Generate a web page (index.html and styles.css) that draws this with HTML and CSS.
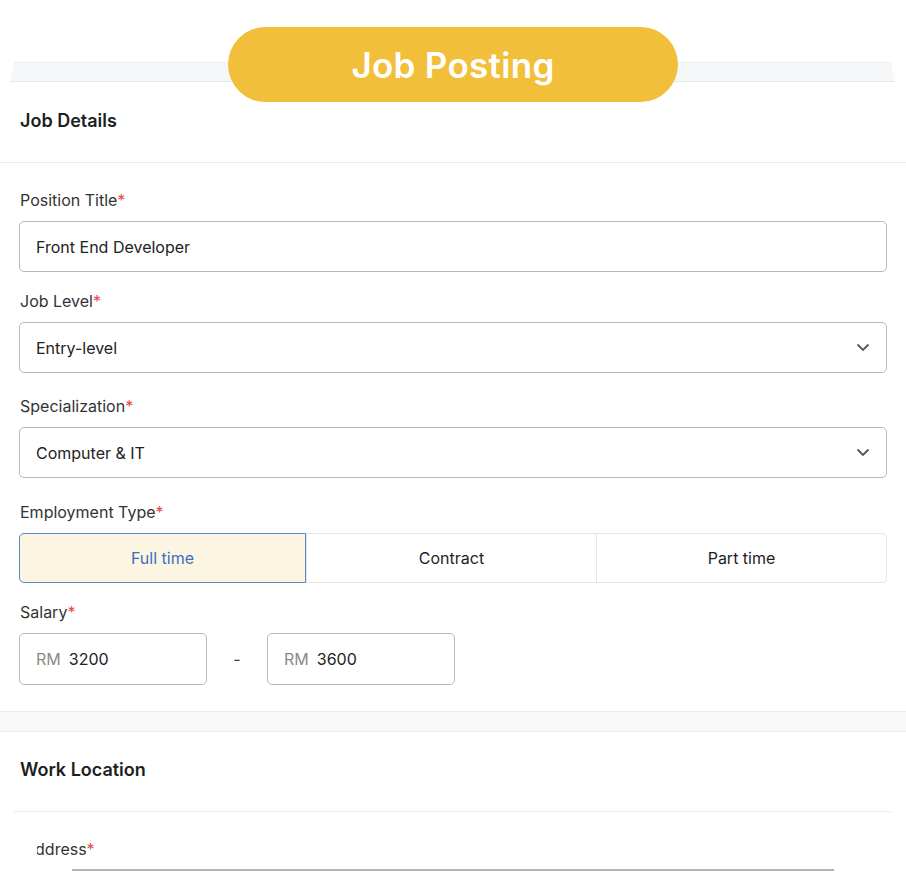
FILE: index.html
```html
<!DOCTYPE html>
<html lang="en">
<head>
  <meta charset="UTF-8" />
  <meta name="viewport" content="width=device-width, initial-scale=1.0"/>
  <title>Job Posting</title>
  <link rel="stylesheet" href="styles.css">
</head>
<body>

  <header class="hero">
    <div class="hero-bar"></div>
    <h1 class="pill">Job Posting</h1>
  </header>

  <section class="card">
    <h2 class="card-title">Job Details</h2>
    <div class="form">
      <div class="field">
        <label>Position Title<span class="req">*</span></label>
        <div class="input">Front End Developer</div>
      </div>

      <div class="field">
        <label>Job Level<span class="req">*</span></label>
        <div class="input select">
          <span>Entry-level</span>
          <svg class="chev" width="14" height="9" viewBox="0 0 14 9"><path d="M1.5 1.5 L7 7 L12.5 1.5" fill="none" stroke="#555" stroke-width="1.8"/></svg>
        </div>
      </div>

      <div class="field roomy">
        <label>Specialization<span class="req">*</span></label>
        <div class="input select">
          <span>Computer &amp; IT</span>
          <svg class="chev" width="14" height="9" viewBox="0 0 14 9"><path d="M1.5 1.5 L7 7 L12.5 1.5" fill="none" stroke="#555" stroke-width="1.8"/></svg>
        </div>
      </div>

      <div class="field roomy">
        <label>Employment Type<span class="req">*</span></label>
        <div class="segments">
          <button class="seg active">Full time</button>
          <button class="seg">Contract</button>
          <button class="seg">Part time</button>
        </div>
      </div>

      <div class="field">
        <label>Salary<span class="req">*</span></label>
        <div class="salary">
          <div class="input money"><span class="cur">RM</span>3200</div>
          <span class="dash">-</span>
          <div class="input money"><span class="cur">RM</span>3600</div>
        </div>
      </div>
    </div>
  </section>

  <div class="band"></div>

  <section class="card">
    <h2 class="card-title narrow">Work Location</h2>
    <div class="form tail">
      <label class="cut"><span>Address<span class="req">*</span></span></label>
      <div class="edge"></div>
    </div>
  </section>

</body>
</html>
```

FILE: styles.css
```css
body {
  margin: 0;
  font-family: Inter, "Open Sans", sans-serif;
  background-color: #fff;
  color: #222;
  overflow: hidden;
}
.hero {
  display: grid;
  height: 102px;
}
.hero-bar,
.pill {
  grid-area: 1 / 1;
}
.hero-bar {
  margin: 62px 11px 0 10px;
  height: 20px;
  background-color: #f6f7f9;
  border-top: 1px solid #ececee;
  border-bottom: 1px solid #e8e9eb;
  box-sizing: border-box;
  clip-path: polygon(4px 0, calc(100% - 4px) 0, 100% 100%, 0 100%);
}
.pill {
  position: relative;
  z-index: 1;
  justify-self: center;
  margin: 27px 0 0;
  width: 450px;
  height: 75px;
  border-radius: 38px;
  background-color: #f2bf3a;
  color: #fff;
  font-size: 35px;
  font-weight: 600;
  display: flex;
  align-items: center;
  justify-content: center;
  letter-spacing: 0.3px;
}
.card-title {
  margin: 0;
  padding: 7px 20px 29px;
  font-size: 18px;
  line-height: 24px;
  font-weight: 600;
  color: #1e1e1e;
  border-bottom: 1px solid #ebebeb;
}
.card-title.narrow {
  padding-top: 26px;
  margin: 0 15px 0 14px;
  padding-left: 6px;
  padding-right: 0;
}
.form {
  padding: 27px 19px 26px;
  display: flex;
  flex-direction: column;
  gap: 19px;
}
.field.roomy {
  margin-top: 4px;
}
.field.roomy + .field.roomy {
  margin-top: 5px;
}
.field label {
  display: block;
  font-size: 16px;
  line-height: 20px;
  color: #333;
  margin: 0 0 11px 1px;
}
.req {
  color: #e2484d;
}
.input {
  height: 51px;
  box-sizing: border-box;
  border: 1px solid #b8b8b8;
  border-radius: 5px;
  padding: 0 16px;
  display: flex;
  align-items: center;
  font-size: 16px;
  color: #222;
}
.select {
  justify-content: space-between;
}
.segments {
  display: flex;
  height: 50px;
  box-sizing: border-box;
  border: 1px solid #e6e6e6;
  border-radius: 5px;
}
.seg {
  flex: 1;
  border: none;
  border-left: 1px solid #e6e6e6;
  background: #fff;
  font-family: inherit;
  font-size: 16px;
  color: #1e1e1e;
  padding: 0;
}
.seg:first-child {
  border-left: none;
}
.seg:last-child {
  border-radius: 0 5px 5px 0;
}
.seg.active {
  flex: 0 0 287px;
  margin: -1px 0 -1px -1px;
  border: 1px solid #5a88c6;
  border-radius: 5px 0 0 5px;
  background-color: #fcf5e2;
  color: #3b6fc0;
}
.salary {
  display: flex;
  align-items: center;
}
.money {
  width: 188px;
  height: 52px;
}
.cur {
  color: #8a8a8a;
  margin-right: 8px;
}
.dash {
  width: 60px;
  text-align: center;
  font-size: 16px;
  color: #444;
}
.band {
  height: 21px;
  background-color: #f7f8fa;
  border-top: 1px solid #ebebeb;
  border-bottom: 1px solid #ebebeb;
  box-sizing: border-box;
}
.tail {
  gap: 10px;
}
.cut {
  display: block;
  width: 60px;
  margin-left: 18px;
  overflow: hidden;
  font-size: 16px;
  line-height: 20px;
  color: #333;
}
.cut > span {
  margin-left: -13px;
  white-space: nowrap;
}
.edge {
  margin: 0 53px 0 53px;
  height: 2px;
  background-color: #b4b4b4;
}
```
